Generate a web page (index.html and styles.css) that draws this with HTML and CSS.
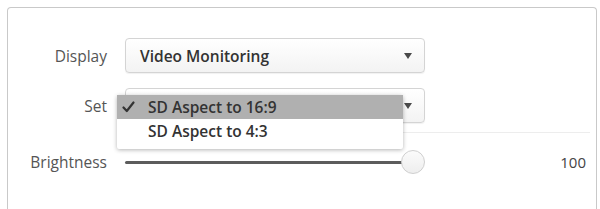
FILE: index.html
```html
<!DOCTYPE html>
<html>
<head>
<meta charset="utf-8">
<link rel="stylesheet" href="styles.css">
</head>
<body>
<div class="panel">
  <div class="grid">
    <div class="label">Display</div>
    <div class="select"><span class="value">Video Monitoring</span><span class="arrow"></span></div>
    <div></div>

    <div class="label">Set</div>
    <div class="select"><span class="value"></span><span class="arrow"></span></div>
    <div></div>
  </div>
  <div class="divider"></div>
  <div class="grid slider-row">
    <div class="label">Brightness</div>
    <div class="slider"><div class="track"></div><div class="knob"></div></div>
    <div class="num">100</div>
  </div>

  <div class="menu">
    <div class="item selected"><span class="check"><svg width="13" height="12" viewBox="0 0 13 12"><path d="M1.5 6.5 L4.8 10 L11.5 1.5" fill="none" stroke="#333" stroke-width="2.2" stroke-linecap="round" stroke-linejoin="round"/></svg></span>SD Aspect to 16:9</div>
    <div class="item"><span class="check"></span>SD Aspect to 4:3</div>
  </div>
</div>
</body>
</html>
```
FILE: styles.css
```css
html, body {
  margin: 0;
  padding: 0;
  background: #ffffff;
  font-family: "Open Sans", "DejaVu Sans", sans-serif;
}
.panel {
  position: relative;
  margin: 7px 0 0 7px;
  width: 590px;
  height: 202px;
  border: 1px solid #c9c9c9;
  border-bottom: none;
  border-radius: 4px 4px 0 0;
  padding-top: 30px;
  box-sizing: border-box;
}
.grid {
  display: grid;
  grid-template-columns: 99px 300px 1fr;
  column-gap: 18px;
  row-gap: 15px;
  align-items: center;
}
.label {
  text-align: right;
  font-size: 15.5px;
  color: #555;
}
.select {
  height: 35px;
  box-sizing: border-box;
  border: 1px solid #d4d4d4;
  border-radius: 4px;
  background: linear-gradient(#ffffff, #f3f3f3);
  box-shadow: 0 1px 1px rgba(0,0,0,0.06);
  display: flex;
  align-items: center;
  justify-content: space-between;
  padding: 0 12px 0 14px;
}
.value {
  font-size: 15.5px;
  font-weight: 600;
  color: #333;
}
.arrow {
  width: 0;
  height: 0;
  border-left: 4px solid transparent;
  border-right: 4px solid transparent;
  border-top: 6px solid #4a4a4a;
}
.divider {
  height: 1px;
  background: #ededed;
  margin: 9px 6px 0 110px;
}
.slider-row {
  margin-top: 17px;
}
.slider {
  position: relative;
  height: 24px;
  display: flex;
  align-items: center;
}
.track {
  flex: 1;
  height: 3px;
  background: #5c5c5c;
  border-radius: 2px;
  margin-right: 12px;
}
.knob {
  position: absolute;
  right: 0;
  top: 0;
  width: 24px;
  height: 24px;
  box-sizing: border-box;
  border-radius: 50%;
  border: 1px solid #cfcfcf;
  background: linear-gradient(#fbfbfb, #eeeeee);
}
.num {
  text-align: right;
  padding-right: 10px;
  font-size: 15px;
  color: #444;
}
.menu {
  position: absolute;
  left: 109px;
  top: 87px;
  width: 286px;
  padding-bottom: 6px;
  background: #fff;
  box-shadow: 0 1px 4px rgba(0,0,0,0.3);
  border-radius: 2px;
}
.item {
  height: 24px;
  display: flex;
  align-items: center;
  font-size: 15.5px;
  font-weight: 600;
  color: #333;
}
.item.selected {
  background: #b0b0b0;
}
.check {
  width: 31px;
  padding-left: 5px;
  box-sizing: border-box;
  display: flex;
  align-items: center;
}
```
